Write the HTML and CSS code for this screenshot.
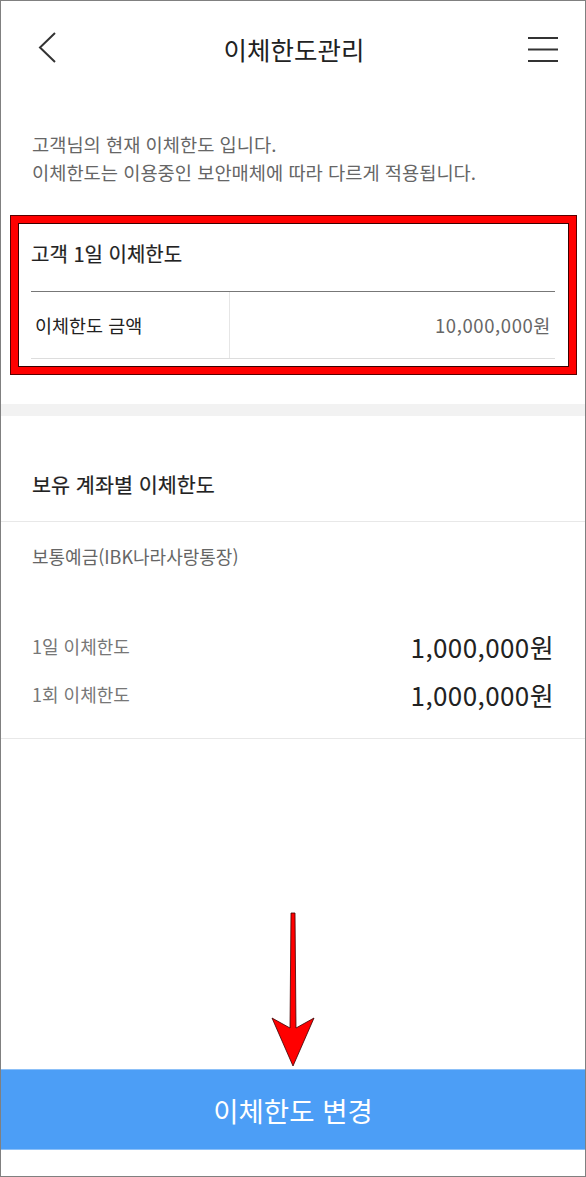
FILE: index.html
```html
<!DOCTYPE html>
<html lang="ko">
<head>
    <meta charset="UTF-8">
    <title>이체한도관리</title>
    <link rel="stylesheet" href="styles.css">
</head>
<body>
    <div class="screen">
        <div class="header">
            <svg class="back" width="20" height="32" viewBox="0 0 20 32">
                <polyline points="18,1 3,15.5 18,30" fill="none" stroke="#333" stroke-width="2"/>
            </svg>
            <h1 class="title">이체한도관리</h1>
            <svg class="menu" width="32" height="26" viewBox="0 0 32 26">
                <line x1="1" y1="2" x2="31" y2="2" stroke="#333" stroke-width="2"/>
                <line x1="1" y1="13.5" x2="31" y2="13.5" stroke="#333" stroke-width="2"/>
                <line x1="1" y1="25" x2="31" y2="25" stroke="#333" stroke-width="2"/>
            </svg>
        </div>

        <p class="intro">고객님의 현재 이체한도 입니다.<br>이체한도는 이용중인 보안매체에 따라 다르게 적용됩니다.</p>

        <div class="card">
            <h2 class="card-title">고객 1일 이체한도</h2>
            <div class="limit-row">
                <div class="limit-label">이체한도 금액</div>
                <div class="limit-value">10,000,000원</div>
            </div>
        </div>

        <div class="band"></div>

        <h2 class="section-title">보유 계좌별 이체한도</h2>
        <div class="account">
            <p class="account-name">보통예금(IBK나라사랑통장)</p>
            <div class="account-row">
                <span class="row-label">1일 이체한도</span>
                <span class="row-value">1,000,000원</span>
            </div>
            <div class="account-row">
                <span class="row-label">1회 이체한도</span>
                <span class="row-value">1,000,000원</span>
            </div>
        </div>

        <div class="spacer"></div>

        <button class="change-btn">이체한도 변경</button>

        <!-- annotation arrow over the page -->
        <svg class="arrow" width="50" height="162" viewBox="0 0 50 162">
            <polygon points="23,5 27,5 28,120 46,110 25,158 4,110 22,120" fill="#ff0000" stroke="#3a0000" stroke-width="0.8"/>
        </svg>
    </div>
</body>
</html>
```

FILE: styles.css
```css
body {
    margin: 0;
    font-family: "Noto Sans CJK KR", "Noto Sans", sans-serif;
    background-color: #fff;
}
.screen {
    position: relative;
    width: 586px;
    height: 1177px;
    box-sizing: border-box;
    border: 1px solid #808080;
    display: flex;
    flex-direction: column;
    overflow: hidden;
}
.header {
    height: 96px;
    display: flex;
    align-items: center;
    justify-content: space-between;
    padding: 0 26px 0 36px;
    flex-shrink: 0;
}
.back {
    margin-top: -2px;
}
.title {
    margin: 0;
    font-size: 25.5px;
    font-weight: 400;
    color: #222;
    line-height: 32px;
    padding-left: 4px;
}
.menu {
    margin-top: -1px;
}
.intro {
    margin: 33px 0 0;
    padding: 0 31px;
    font-size: 18.7px;
    line-height: 28px;
    color: #666;
}
.card {
    margin: 30px 9px 0 10px;
    border: 7px solid #ff0000;
    box-shadow: inset 0 0 0 1px #3a0000, 0 0 0 1px #5a0000;
    padding: 0 14px 8px 13px;
}
.card-title {
    margin: 0;
    padding: 17px 0 23px;
    font-size: 20px;
    font-weight: 400;
    line-height: 28px;
    color: #222;
    -webkit-text-stroke: 0.2px #222;
    border-bottom: 1px solid #777;
}
.limit-row {
    display: flex;
    height: 66px;
    border-bottom: 1px solid #ddd;
}
.limit-label {
    width: 194px;
    padding-left: 4px;
    border-right: 1px solid #e6e6e6;
    display: flex;
    align-items: center;
    font-size: 18.5px;
    color: #222;
}
.limit-value {
    flex: 1;
    padding-right: 4px;
    display: flex;
    align-items: center;
    justify-content: flex-end;
    font-size: 18.5px;
    letter-spacing: 0.6px;
    color: #666;
}
.band {
    margin-top: 30px;
    height: 12px;
    background-color: #f2f2f2;
    flex-shrink: 0;
}
.section-title {
    margin: 0;
    padding: 54px 31px 23px;
    font-size: 20.7px;
    font-weight: 400;
    line-height: 28px;
    color: #222;
    -webkit-text-stroke: 0.2px #222;
    border-bottom: 1px solid #e8e8e8;
}
.account {
    padding: 21px 31px 20px 31px;
    border-bottom: 1px solid #e8e8e8;
}
.account-name {
    margin: 0 0 53px;
    font-size: 18px;
    line-height: 26px;
    color: #666;
}
.account-row {
    display: flex;
    justify-content: space-between;
    align-items: center;
    height: 48px;
}
.row-label {
    font-size: 18px;
    color: #777;
}
.row-value {
    font-size: 26px;
    letter-spacing: 0.4px;
    color: #222;
}
.spacer {
    flex: 1;
}
.change-btn {
    height: 81px;
    margin-bottom: 26px;
    border: none;
    border-top: 1px solid #8cc0f8;
    border-bottom: 1px solid #8cc0f8;
    background-color: #4c9ef6;
    color: #fff;
    font-family: inherit;
    font-size: 27.5px;
    font-weight: 400;
    flex-shrink: 0;
}
.arrow {
    position: absolute;
    left: 267px;
    top: 907px;
}
```
